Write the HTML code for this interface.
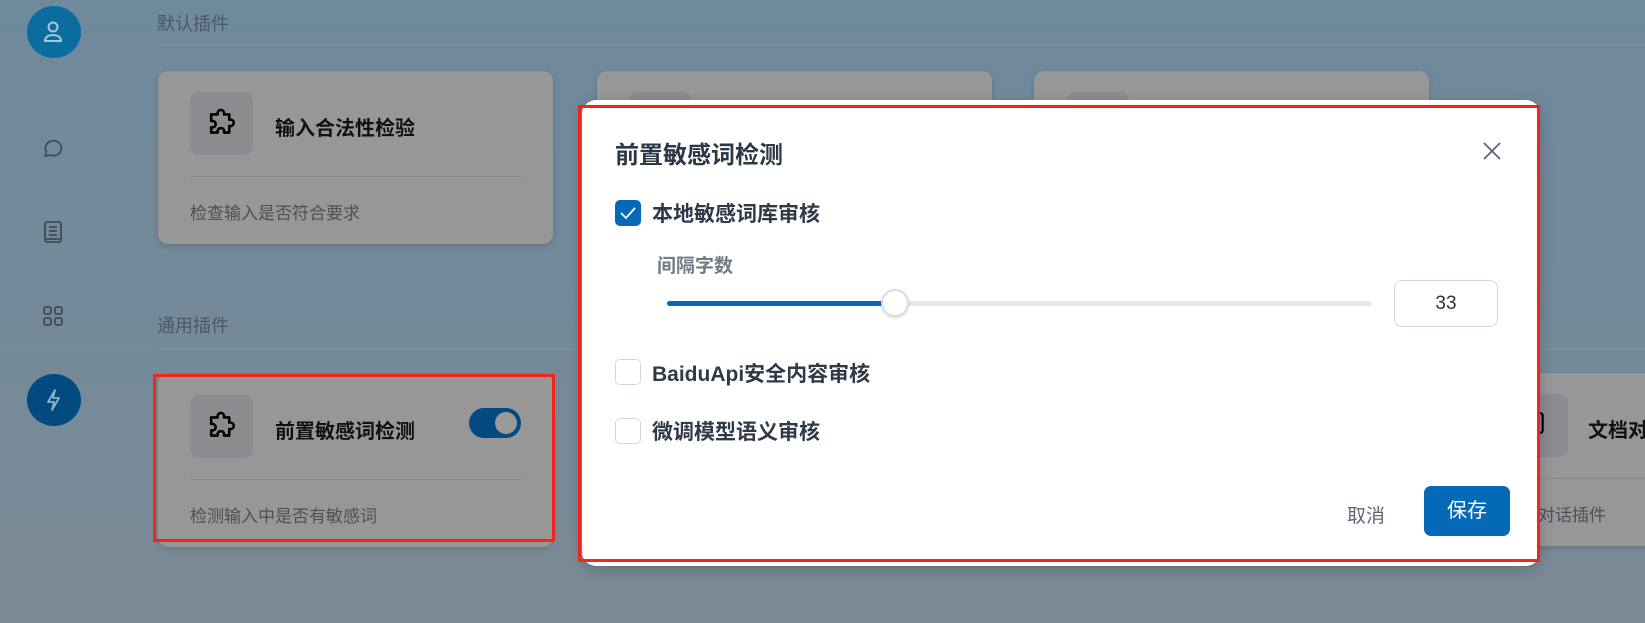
<!DOCTYPE html>
<html><head><meta charset="utf-8"><style>
*{margin:0;padding:0;box-sizing:border-box}
body{width:1645px;height:623px;overflow:hidden;position:relative;background:linear-gradient(180deg,#6f899d 0%,#758a99 60%,#7b8a95 100%);font-family:"Liberation Sans","Noto Sans CJK SC",sans-serif}
.abs{position:absolute}
.sec{position:absolute;left:157px;font-size:18px;color:#4a5866}
.line{position:absolute;left:157px;right:0;height:1px;background:#8192a0}
.card{position:absolute;width:395px;height:173px;background:#979797;border-radius:10px;box-shadow:0 2px 6px rgba(0,0,0,.15)}
.ib{position:absolute;left:32px;top:21px;width:63px;height:63px;border-radius:9px;background:#8a8c90}
.ib svg{position:absolute;left:16px;top:16px}
.ct{position:absolute;left:117px;top:41px;font-size:20px;font-weight:bold;color:#111}
.dv{position:absolute;left:32px;right:32px;top:105px;height:1px;background:#888}
.cd{position:absolute;left:32px;top:128px;font-size:17px;color:#4b5057}
.modal{position:absolute;left:582px;top:100px;width:958px;height:466px;background:#fff;border-radius:14px;box-shadow:0 4px 14px rgba(0,0,0,.2)}
.cb{position:absolute;width:26px;height:26px;border:1px solid #cfd6de;border-radius:5px;background:#fff}
.lb{position:absolute;font-size:21px;font-weight:bold;color:#2f3a48}
</style></head><body>
<div class="abs" style="left:27px;top:6px;width:54px;height:52px;border-radius:50%;background:#0a6c9f"></div>
<svg class="abs" style="left:42px;top:20px" width="22" height="24" viewBox="0 0 22 24" fill="none" stroke="#a9c7da" stroke-width="2"><circle cx="11" cy="7" r="4.5"/><path d="M3 21c0-4 3.5-6 8-6s8 2 8 6z"/></svg>
<svg class="abs" style="left:42px;top:137px" width="22" height="22" viewBox="0 0 22 22" fill="none" stroke="#3f4a57" stroke-width="1.7"><path d="M3 19l1.5-4A8 7.5 0 1 1 8 18z"/></svg>
<svg class="abs" style="left:43px;top:220px" width="20" height="24" viewBox="0 0 20 24" fill="none" stroke="#3f4a57" stroke-width="1.8"><rect x="2" y="2" width="16" height="20" rx="2"/><path d="M6 7h8M6 11h8M6 15h8M2 19h16"/></svg>
<svg class="abs" style="left:42px;top:305px" width="22" height="22" viewBox="0 0 22 22" fill="none" stroke="#3f4a57" stroke-width="1.8"><rect x="2" y="2" width="7" height="7" rx="2"/><rect x="13" y="2" width="7" height="7" rx="2"/><rect x="2" y="13" width="7" height="7" rx="2"/><rect x="13" y="13" width="7" height="7" rx="2"/></svg>
<div class="abs" style="left:27px;top:374px;width:54px;height:52px;border-radius:50%;background:#024b80"></div>
<svg class="abs" style="left:44px;top:388px" width="18" height="24" viewBox="0 0 18 24" fill="none" stroke="#8fb2cc" stroke-width="1.8" stroke-linejoin="round"><path d="M11 2L4 14h6l-2 8 7-12H9z"/></svg>

<div class="sec" style="top:10px">默认插件</div>
<div class="line" style="top:45px"></div>
<div class="sec" style="top:312px">通用插件</div>
<div class="line" style="top:349px"></div>

<div class="card" style="left:158px;top:71px"><div class="ib"><svg width="31" height="31" viewBox="0 0 24 24" fill="none" stroke="#000" stroke-width="2" stroke-linejoin="round"><path d="M9 4a2.5 2.5 0 0 1 5 0v1h4v4h1a2.5 2.5 0 0 1 0 5h-1v5h-4v-1a2.5 2.5 0 0 0-5 0v1H4v-4h1a2.5 2.5 0 0 0 0-5H4V5h5z"/></svg></div><div class="ct">输入合法性检验</div><div class="dv"></div><div class="cd">检查输入是否符合要求</div></div>
<div class="card" style="left:597px;top:71px"><div class="ib"></div></div>
<div class="card" style="left:1034px;top:71px"><div class="ib"></div></div>

<div class="card" style="left:158px;top:374px"><div class="ib"><svg width="31" height="31" viewBox="0 0 24 24" fill="none" stroke="#000" stroke-width="2" stroke-linejoin="round"><path d="M9 4a2.5 2.5 0 0 1 5 0v1h4v4h1a2.5 2.5 0 0 1 0 5h-1v5h-4v-1a2.5 2.5 0 0 0-5 0v1H4v-4h1a2.5 2.5 0 0 0 0-5H4V5h5z"/></svg></div><div class="ct">前置敏感词检测</div>
<div class="abs" style="left:311px;top:34px;width:52px;height:30px;border-radius:15px;background:#024a7f"><div class="abs" style="left:26px;top:4px;width:22px;height:22px;border-radius:50%;background:#9a9a9a"></div></div>
<div class="dv"></div><div class="cd">检测输入中是否有敏感词</div></div>
<div class="abs" style="left:153px;top:374px;width:402px;height:168px;border:3px solid #f0261c"></div>

<div class="card" style="left:1473px;top:373px;width:260px"><div class="ib"><svg width="26" height="26" viewBox="0 0 24 24" fill="none" stroke="#000" stroke-width="2"><rect x="4" y="3" width="16" height="18" rx="2"/></svg></div><div class="ct" style="left:115px">文档对话</div><div class="dv"></div><div class="cd" style="left:65px">对话插件</div></div>

<div class="modal">
<div class="abs" style="left:33px;top:35px;font-size:24px;font-weight:bold;color:#2d3846">前置敏感词检测</div>
<svg class="abs" style="left:901px;top:42px" width="18" height="18" viewBox="0 0 18 18" stroke="#5b6675" stroke-width="1.8"><path d="M1 1l16 16M17 1L1 17"/></svg>
<div class="cb" style="left:33px;top:100px;background:#0469b7;border-color:#0469b7"><svg width="26" height="26" viewBox="0 0 26 26" style="position:absolute;left:-1px;top:-1px" fill="none" stroke="#fff" stroke-width="1.8"><path d="M6 13l5 5 9-10"/></svg></div>
<div class="lb" style="left:70px;top:98px">本地敏感词库审核</div>
<div class="abs" style="left:75px;top:151px;font-size:19px;font-weight:bold;color:#717a86">间隔字数</div>
<div class="abs" style="left:85px;top:201px;width:705px;height:5px;border-radius:3px;background:#e3e8ef"></div>
<div class="abs" style="left:85px;top:201px;width:228px;height:5px;border-radius:3px;background:#0469b7"></div>
<div class="abs" style="left:299px;top:189px;width:28px;height:28px;border-radius:50%;background:#fff;border:2px solid #d9dee5;box-shadow:0 1px 3px rgba(0,0,0,.15)"></div>
<div class="abs" style="left:812px;top:180px;width:104px;height:47px;border:1px solid #cfd8e3;border-radius:8px;text-align:center;line-height:45px;font-size:19px;color:#333">33</div>
<div class="cb" style="left:33px;top:259px"></div>
<div class="lb" style="left:70px;top:258px">BaiduApi安全内容审核</div>
<div class="cb" style="left:33px;top:318px"></div>
<div class="lb" style="left:70px;top:316px">微调模型语义审核</div>
<div class="abs" style="left:765px;top:401px;font-size:19px;color:#5d6673">取消</div>
<div class="abs" style="left:842px;top:386px;width:86px;height:50px;border-radius:7px;background:#0469b7;color:#fff;font-size:20px;text-align:center;line-height:50px">保存</div>
</div>
<div class="abs" style="left:578px;top:105px;width:962px;height:457px;border:3px solid #f0261c"></div>
</body></html>
